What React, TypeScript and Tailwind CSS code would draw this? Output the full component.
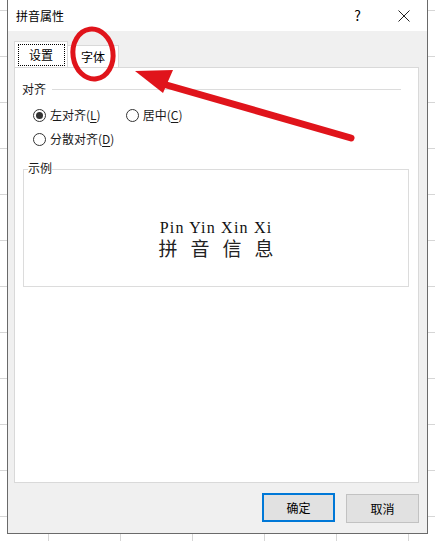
import React from 'react';

const ui = { fontFamily: '"Noto Sans CJK SC", "Noto Sans", sans-serif' };

function Radio({ checked, label, accel }: { checked?: boolean; label: string; accel: string }) {
  return (
    <div className="flex items-center gap-[4px] text-[12px] text-[#1a1a1a]">
      <span className="flex h-[13px] w-[13px] items-center justify-center rounded-full border border-[#333] bg-white">
        {checked && <span className="h-[7px] w-[7px] rounded-full bg-[#333]" />}
      </span>
      <span>
        {label}(<span className="underline underline-offset-2">{accel}</span>)
      </span>
    </div>
  );
}

export default function App() {
  return (
    <div
      className="relative h-[541px] w-[435px] overflow-hidden bg-white bg-[linear-gradient(to_bottom,#d6d6d6_1px,transparent_1px),linear-gradient(to_right,#d6d6d6_1px,transparent_1px)] bg-[length:72px_46px] bg-[position:48px_10px]"
      style={ui}
    >
      <div className="ml-[7px] flex h-[534px] w-[421px] flex-col border-x border-b border-[#6a6a6a] bg-[#f0f0f0]">
        {/* title bar */}
        <div className="flex h-[31px] shrink-0 items-center bg-white pl-[8px] text-[12px] text-black">
          <span>拼音属性</span>
          <span className="ml-auto mr-[37px] text-[14px]">?</span>
          <svg width="12" height="12" viewBox="0 0 12 12" className="mr-[17px]">
            <path d="M0.5 0.5L11.5 11.5M11.5 0.5L0.5 11.5" stroke="#222" strokeWidth="1" />
          </svg>
        </div>

        <div className="flex flex-1 flex-col pl-[6px] pr-[8px] pt-[11px]">
          {/* tabs */}
          <div className="relative z-10 flex h-[25px] items-end">
            <div className="flex h-[26px] w-[54px] items-center justify-center border border-b-0 border-[#d9d9d9] bg-white">
              <span className="flex h-[22px] w-[47px] items-center justify-center border border-dotted border-black text-[12px]">
                设置
              </span>
            </div>
            <div className="mb-[-1px] flex h-[23px] w-[51px] items-center justify-center border border-l-0 border-[#d9d9d9] bg-white text-[12px]">
              字体
            </div>
          </div>

          {/* panel */}
          <div className="h-[416px] border border-[#d9d9d9] bg-white px-[7px] pt-[12px]">
            <div className="flex items-center gap-[6px] text-[12px] text-[#1a1a1a]">
              <span>对齐</span>
              <span className="h-px flex-1 bg-[#dcdcdc]" />
              <span className="w-[4px]" />
            </div>
            <div className="mt-[8px] flex flex-col gap-[6px] pl-[11px]">
              <div className="flex gap-[25px]">
                <Radio checked label="左对齐" accel="L" />
                <Radio label="居中" accel="C" />
              </div>
              <Radio label="分散对齐" accel="D" />
            </div>

            <div className="relative ml-[1px] mr-[2px] mt-[21px] h-[118px] border border-[#dcdcdc]">
              <span className="absolute left-[4px] top-[-10px] bg-white text-[12px] leading-[16px] text-[#1a1a1a]">示例</span>
              <div className="flex h-full flex-col items-center pt-[49px]">
                <div className="text-[16px] leading-[17px] tracking-[1.2px] text-[#111]" style={{ fontFamily: '"Liberation Serif", serif' }}>
                  Pin Yin Xin Xi
                </div>
                <div className="mt-[1px] flex gap-[13px] text-[19px] leading-[22px] text-[#222]">
                  <span>拼</span>
                  <span>音</span>
                  <span>信</span>
                  <span>息</span>
                </div>
              </div>
            </div>
          </div>

          {/* buttons */}
          <div className="mt-[10px] flex justify-end gap-[11px]">
            <button className="h-[29px] w-[73px] border-2 border-[#0078d7] bg-[#e1e1e1] text-[12px] text-black">确定</button>
            <button className="mt-[1px] h-[29px] w-[73px] border border-[#c2c2c2] bg-[#e1e1e1] text-[12px] text-black">取消</button>
          </div>
        </div>
      </div>

      {/* red annotation */}
      <svg className="pointer-events-none absolute left-0 top-0 z-20" width="435" height="541">
        <ellipse cx="93" cy="54" rx="20" ry="25" fill="none" stroke="#e0141b" strokeWidth="5" transform="rotate(-8 93 54)" />
        <line x1="156" y1="82" x2="351" y2="138" stroke="#e0141b" strokeWidth="7" strokeLinecap="round" />
        <polygon points="135,71 173,70 163,93" fill="#e0141b" />
      </svg>
    </div>
  );
}
